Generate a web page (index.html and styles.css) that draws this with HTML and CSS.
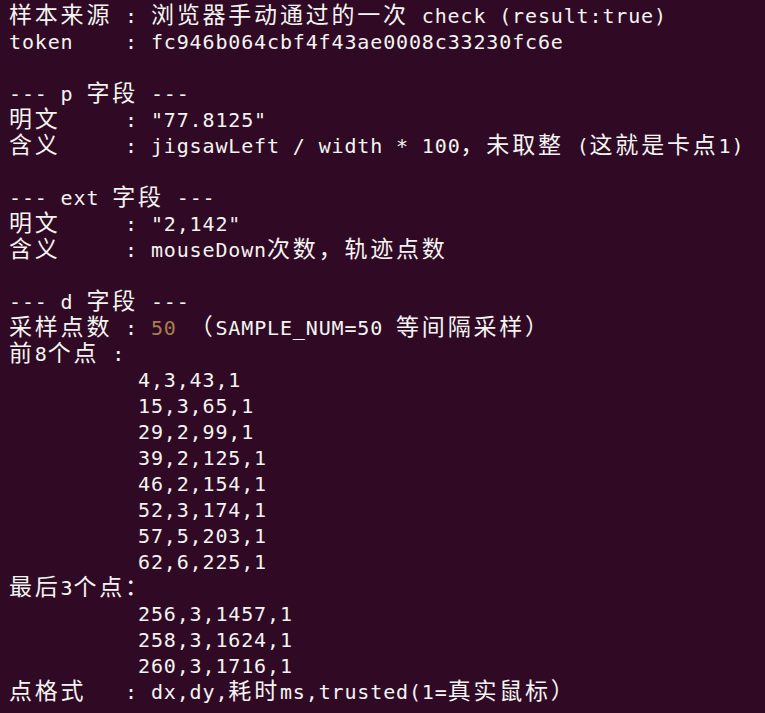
FILE: index.html
```html
<!DOCTYPE html>
<html lang="zh">
<head>
<meta charset="utf-8">
<link rel="stylesheet" href="styles.css">
</head>
<body>
<div class="term">
<div class="l"><span class="c">样本来源</span> : <span class="c">浏览器手动通过的一次</span> check (result:true)</div>
<div class="l">token    : fc946b064cbf4f43ae0008c33230fc6e</div>
<div class="l"></div>
<div class="l">--- p <span class="c">字段</span> ---</div>
<div class="l"><span class="c">明文</span>     : "77.8125"</div>
<div class="l"><span class="c">含义</span>     : jigsawLeft / width * 100<span class="c">，未取整</span> (<span class="c">这就是卡点</span>1)</div>
<div class="l"></div>
<div class="l">--- ext <span class="c">字段</span> ---</div>
<div class="l"><span class="c">明文</span>     : "2,142"</div>
<div class="l"><span class="c">含义</span>     : mouseDown<span class="c">次数，轨迹点数</span></div>
<div class="l"></div>
<div class="l">--- d <span class="c">字段</span> ---</div>
<div class="l"><span class="c">采样点数</span> : <span class="n">50</span> <span class="c">（</span>SAMPLE_NUM=50 <span class="c">等间隔采样）</span></div>
<div class="l"><span class="c">前</span>8<span class="c">个点</span> :</div>
<div class="l">          4,3,43,1</div>
<div class="l">          15,3,65,1</div>
<div class="l">          29,2,99,1</div>
<div class="l">          39,2,125,1</div>
<div class="l">          46,2,154,1</div>
<div class="l">          52,3,174,1</div>
<div class="l">          57,5,203,1</div>
<div class="l">          62,6,225,1</div>
<div class="l"><span class="c">最后</span>3<span class="c">个点：</span></div>
<div class="l">          256,3,1457,1</div>
<div class="l">          258,3,1624,1</div>
<div class="l">          260,3,1716,1</div>
<div class="l"><span class="c">点格式</span>   : dx,dy,<span class="c">耗时</span>ms,trusted(1=<span class="c">真实鼠标）</span></div>
</div>
</body>
</html>
```
FILE: styles.css
```css
html, body {
  margin: 0;
  padding: 0;
  background: #300a24;
}
body {
  width: 765px;
  height: 713px;
  overflow: hidden;
}
.term {
  padding: 3px 0 0 9px;
  font-family: "DejaVu Sans Mono", "Noto Sans CJK SC", monospace;
  font-size: 20px;
  letter-spacing: 0.86px;
  line-height: 26px;
  color: #f4f4f2;
}
.l {
  height: 26px;
  white-space: pre;
}
.c {
  font-family: "Noto Sans CJK SC", sans-serif;
  font-size: 23px;
  letter-spacing: 2.8px;
  line-height: 20px;
}
.n {
  color: #a97d4f;
}
```
